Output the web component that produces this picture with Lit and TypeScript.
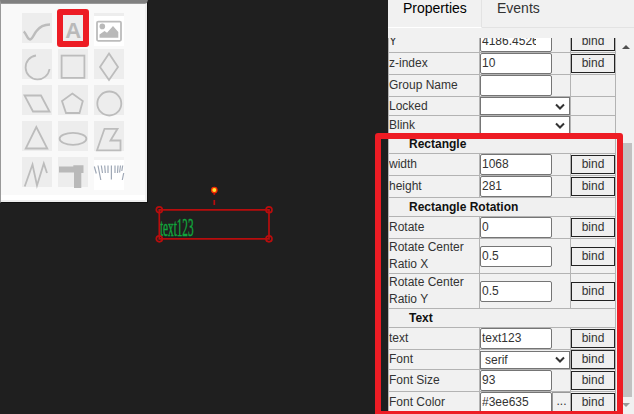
import { LitElement, html, css, svg, nothing } from "lit";
import { customElement } from "lit/decorators.js";
import { classMap } from "lit/directives/class-map.js";

interface Row {
  kind: "head" | "input" | "select" | "color";
  label: string;
  value?: string;
  bind?: boolean;
  size: number;
}

const ROWS: Row[] = [
  { kind: "input", label: "Y", value: "4186.4526", bind: true, size: 22 },
  { kind: "input", label: "z-index", value: "10", bind: true, size: 22 },
  { kind: "input", label: "Group Name", value: "", size: 22 },
  { kind: "select", label: "Locked", value: "", size: 19 },
  { kind: "select", label: "Blink", value: "", size: 19 },
  { kind: "head", label: "Rectangle", size: 19 },
  { kind: "input", label: "width", value: "1068", bind: true, size: 22 },
  { kind: "input", label: "height", value: "281", bind: true, size: 22 },
  { kind: "head", label: "Rectangle Rotation", size: 19 },
  { kind: "input", label: "Rotate", value: "0", bind: true, size: 22 },
  { kind: "input", label: "Rotate Center Ratio X", value: "0.5", bind: true, size: 35 },
  { kind: "input", label: "Rotate Center Ratio Y", value: "0.5", bind: true, size: 35 },
  { kind: "head", label: "Text", size: 19 },
  { kind: "input", label: "text", value: "text123", bind: true, size: 22 },
  { kind: "select", label: "Font", value: "serif", bind: true, size: 20 },
  { kind: "input", label: "Font Size", value: "93", bind: true, size: 22 },
  { kind: "color", label: "Font Color", value: "#3ee635", bind: true, size: 22 },
];

const ICONS = [
  { art: svg`<path d="M1.7 18.5C4.5 20.5 5 26.5 8 26.5C10.5 26 12 21 14.5 18C18 13.2 22 11.5 28 11.5" stroke-width="2.4"/>` },
  { art: svg`<text x="15.3" y="25" class="letter">A</text>` },
  { art: svg`<rect x="3" y="5.6" width="24" height="19.2" rx="1.2" stroke-width="1.8"/><circle class="fill" cx="8.3" cy="10.4" r="2.8"/><path class="fill" d="M5.5 21.8V18.5L10.5 15L13 16.8L19 10L24.3 16V21.8Z"/>`, paper: true },
  { art: svg`<path d="M14 6.5A12 12 0 1 0 27.5 20"/>` },
  { art: svg`<rect x="3.6" y="6.6" width="22.8" height="22.3"/>` },
  { art: svg`<path d="M15 4.5L24 18L15 31L6 18Z"/>` },
  { art: svg`<path d="M2.5 10.5H19L27.5 26.5H11Z"/>` },
  { art: svg`<path d="M14.3 8.5L24.8 16L21.5 28H8L4 16Z"/>` },
  { art: svg`<circle cx="15.3" cy="18.5" r="12"/>` },
  { art: svg`<path d="M14.3 6L25.3 27.5H3.7Z"/>` },
  { art: svg`<ellipse cx="15" cy="17.8" rx="13.4" ry="6"/>` },
  { art: svg`<path d="M10.5 7.8H23.5L16.5 19.5H26.5V29.3H3Z"/>` },
  { art: svg`<path d="M2.7 29.5L10.5 7.5L15 28.5L21.8 6.5L25 16"/>` },
  { art: svg`<path class="fill" d="M1 9.5H15.3V8.3H25.5V16H23.3V31H16V15.5H1Z"/>` },
  { art: svg`<path class="ticks" d="M.3 6.5L2.3 13.5M4 5.5L6.8 20M7.3 5.5L8.5 13M10.7 5.5L11.3 13M14 5.5V13M17.4 5.5V19.5M21 5.5V13M24 5.5L23.5 13M26.5 5.5L25.6 12.5M28.7 5.5L27.8 11M29.7 13L28.3 20"/>`, paper: true, ruler: true },
];

@customElement("shape-palette")
class ShapePalette extends LitElement {
  static styles = css`
    :host {
      display: block;
      box-sizing: border-box;
      width: 148px;
      height: 203px;
      background: #f9f9f9;
      border-top: 3px solid #808080;
      border-left: 1px solid #999;
      border-right: 1px solid #111;
      border-bottom: 1px solid #111;
    }
    .inner {
      box-sizing: border-box;
      height: 199px;
      padding: 9px 0 0 21px;
      border-top: 1px solid #999;
      border-right: 2px solid #efefef;
      border-bottom: 2px solid #eee;
      background: linear-gradient(#f9f9f9 191px, #fff 191px);
    }
    .grid {
      display: grid;
      grid-template-columns: repeat(3, 30px);
      grid-auto-rows: 30px;
      gap: 6px;
    }
    .tool {
      background: #ededed;
    }
    .paper {
      background: linear-gradient(#ededed 3px, #fff 3px);
      height: 33px;
    }
    .ruler {
      background: linear-gradient(#f2f2f2 3px, #fff 3px);
    }
    svg {
      display: block;
      overflow: visible;
      fill: none;
      stroke: #bcbcbc;
      stroke-width: 1.8;
    }
    .paper svg {
      transform: translateY(3px);
    }
    .fill {
      fill: #b9b9b9;
      stroke: none;
    }
    .letter {
      font: bold 22px "Liberation Sans", Arial, sans-serif;
      fill: #b9b9b9;
      stroke: none;
      text-anchor: middle;
    }
    .ticks {
      stroke: #9fa8b6;
      stroke-width: 1.2;
    }
  `;
  render() {
    return html`<div class="inner"><div class="grid">
      ${ICONS.map(
        ({ art, paper, ruler }) => html`<div class=${classMap({ tool: true, paper: !!paper, ruler: !!ruler })}>
          <svg width="30" height="30" viewBox="0 0 30 30">${art}</svg>
        </div>`
      )}
    </div></div>`;
  }
}

@customElement("property-panel")
class PropertyPanel extends LitElement {
  static styles = css`
    :host {
      display: block;
      height: 414px;
      overflow: hidden;
      background: #f1f1f1;
      color: #333;
      font: 12px/17px "Liberation Sans", Arial, sans-serif;
    }
    .tabs {
      box-sizing: border-box;
      display: flex;
      height: 28px;
      border-bottom: 1px solid #e3e3e3;
      font-size: 14px;
      line-height: 16px;
    }
    .tab {
      box-sizing: border-box;
      width: 94px;
      padding-left: 15px;
      height: 28px;
    }
    .tab.active {
      color: #000;
      border-right: 1px solid #e3e3e3;
      border-bottom: 1px solid #fff;
    }
    .body {
      display: flex;
      justify-content: space-between;
      height: 376px;
      margin-top: 10px;
      overflow: hidden;
    }
    .table {
      width: 228px;
      display: flex;
      flex-direction: column;
      justify-content: flex-end;
      flex: none;
    }
    .row {
      box-sizing: border-box;
      flex: none;
      display: grid;
      grid-template-columns: 91px 91px 45px;
      border-left: 1px solid #b3b3b3;
      border-bottom: 1px solid #b3b3b3;
    }
    .row.head {
      display: block;
      background: #f0f0f0;
      border-right: 1px solid #b3b3b3;
      padding-left: 20px;
      font-weight: bold;
      color: #111;
      line-height: 18px;
    }
    .cell {
      box-sizing: border-box;
      min-width: 0;
      height: 100%;
      overflow: hidden;
      border-right: 1px solid #b3b3b3;
      display: flex;
      align-items: center;
    }
    .field {
      box-sizing: border-box;
      flex: none;
      width: 72px;
      height: 21px;
      border: 1px solid #757575;
      border-radius: 2px;
      background: #fff;
      padding: 0 15px 0 1px;
      line-height: 18px;
    }
    .clip {
      overflow: hidden;
      white-space: nowrap;
    }
    .select {
      box-sizing: border-box;
      flex: 1;
      height: 18px;
      border: 1px solid #757575;
      background: #fff;
      display: flex;
      align-items: center;
      justify-content: space-between;
      padding: 1px 4px 0 4px;
      line-height: 16px;
    }
    .select svg {
      fill: none;
      stroke: #333;
      stroke-width: 2;
    }
    .bind {
      box-sizing: border-box;
      width: 44px;
      height: 19px;
      border: 1px solid #222;
      background: #efefef;
      line-height: 16px;
      text-align: center;
    }
    .more {
      box-sizing: border-box;
      flex: 1;
      height: 21px;
      border-left: 1px solid #999;
      border-top: 1px solid #999;
      text-align: center;
    }
    .scroll {
      width: 17px;
      display: flex;
      flex-direction: column;
      align-items: center;
    }
    .scroll svg {
      display: block;
      flex: none;
    }
    .thumb {
      width: 15px;
      height: 254px;
      margin: 94px 3px 0 0;
      background: #c1c1c1;
      flex: none;
    }
    .up-arrow {
      fill: #505050;
      margin-top: 7px;
    }
    .down-arrow {
      fill: #999;
      margin-top: 6px;
    }
  `;

  control(row: Row) {
    if (row.kind === "select") {
      return html`<div class="select"><span>${row.value}</span><svg width="10" height="8" viewBox="0 0 10 8"><path d="M1 1.5L5 5.5L9 1.5" /></svg></div>`;
    }
    return html`<div class="field"><div class="clip">${row.value}</div></div>
      ${row.kind === "color" ? html`<div class="more">...</div>` : nothing}`;
  }

  render() {
    return html`
      <div class="tabs"><div class="tab active">Properties</div><div class="tab">Events</div></div>
      <div class="body">
        <div class="table">
          ${ROWS.map((row) =>
            row.kind === "head"
              ? html`<div class="row head" style="height:${row.size}px">${row.label}</div>`
              : html`<div class="row" style="height:${row.size}px">
                  <div class="cell">${row.label}</div>
                  <div class="cell">${this.control(row)}</div>
                  <div class="cell">${row.bind ? html`<div class="bind">bind</div>` : nothing}</div>
                </div>`
          )}
        </div>
        <div class="scroll">
          <svg class="up-arrow" width="8" height="4"><path d="M0 4L4 0L8 4Z" /></svg>
          <div class="thumb"></div>
          <svg class="down-arrow" width="8" height="4"><path d="M0 0L4 4L8 0Z" /></svg>
        </div>
      </div>
    `;
  }
}

@customElement("app-root")
class AppRoot extends LitElement {
  static styles = css`
    :host {
      display: block;
      position: relative;
      width: 634px;
      height: 414px;
      overflow: hidden;
      background: #1f1f1f;
    }
    .layout {
      display: grid;
      grid-template-columns: 388px 1fr;
    }
    .shape {
      position: absolute;
      left: 150px;
      top: 175px;
    }
    .box {
      fill: none;
      stroke: #b80d0d;
      stroke-width: 1.7;
    }
    .label {
      font: 26px "Liberation Serif", "Times New Roman", serif;
      fill: #11a63c;
      stroke: #11a63c;
      stroke-width: 0.5;
    }
    .mark {
      position: absolute;
      box-sizing: border-box;
      border: 6px solid #ed1c24;
      border-radius: 3px;
    }
    .mark-tool {
      left: 57px;
      top: 9px;
      width: 32px;
      height: 38px;
    }
    .mark-props {
      left: 375px;
      top: 133px;
      width: 248px;
      height: 284px;
    }
  `;
  render() {
    return html`
      <div class="layout">
        <shape-palette></shape-palette>
        <property-panel></property-panel>
      </div>
      <svg class="shape" width="130" height="75" viewBox="0 0 130 75">
        <text class="label" x="10" y="60.5" textLength="33.5" lengthAdjust="spacingAndGlyphs">text123</text>
        <g class="box">
          <path d="M9.3 34.8H119V63.8H9.3ZM64.3 16V20M64.3 25V30" />
          <circle cx="9.3" cy="34.8" r="3" /><circle cx="119" cy="34.8" r="3" />
          <circle cx="9.3" cy="63.8" r="3" /><circle cx="119" cy="63.8" r="3" />
        </g>
        <circle cx="64.3" cy="15" r="2.7" fill="#ffe030" stroke="#f02a00" stroke-width="1.3" />
      </svg>
      <div class="mark mark-tool"></div>
      <div class="mark mark-props"></div>
    `;
  }
}
